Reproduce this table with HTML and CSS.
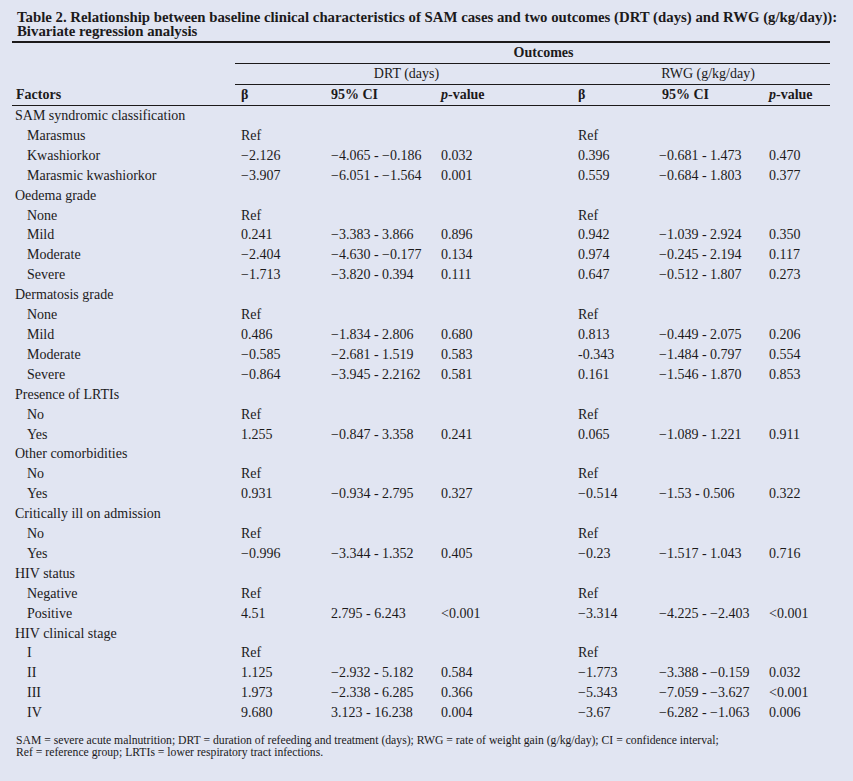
FILE: index.html
```html
<!DOCTYPE html>
<html lang="en">
<head>
<meta charset="utf-8">
<title>Table 2</title>
<link rel="stylesheet" href="styles.css">
</head>
<body>
<div class="page">
  <h1 class="title">Table 2. Relationship between baseline clinical characteristics of SAM cases and two outcomes (DRT (days) and RWG (g/kg/day)):<br>Bivariate regression analysis</h1>
  <table class="stats">
    <colgroup>
      <col class="c-factor"><col class="c-b1"><col class="c-ci1"><col class="c-p1"><col class="c-b2"><col class="c-ci2"><col class="c-p2">
    </colgroup>
    <thead>
      <tr class="h-row">
        <th></th>
        <th colspan="6" class="h-span h-out">Outcomes</th>
      </tr>
      <tr class="h-row">
        <th></th>
        <th colspan="3" class="h-span h-drt">DRT (days)</th>
        <th colspan="3" class="h-span h-rwg">RWG (g/kg/day)</th>
      </tr>
      <tr class="h-row h-cols">
        <th class="factor">Factors</th>
        <th>β</th>
        <th>95% CI</th>
        <th><i>p</i>-value</th>
        <th>β</th>
        <th class="ci2">95% CI</th>
        <th><i>p</i>-value</th>
      </tr>
    </thead>
    <tbody>
      <tr><td class="cat" colspan="7">SAM syndromic classification</td></tr>
      <tr><td class="sub">Marasmus</td><td>Ref</td><td></td><td></td><td>Ref</td><td></td><td></td></tr>
      <tr><td class="sub">Kwashiorkor</td><td>−2.126</td><td>−4.065 - −0.186</td><td>0.032</td><td>0.396</td><td>−0.681 - 1.473</td><td>0.470</td></tr>
      <tr><td class="sub">Marasmic kwashiorkor</td><td>−3.907</td><td>−6.051 - −1.564</td><td>0.001</td><td>0.559</td><td>−0.684 - 1.803</td><td>0.377</td></tr>
      <tr><td class="cat" colspan="7">Oedema grade</td></tr>
      <tr><td class="sub">None</td><td>Ref</td><td></td><td></td><td>Ref</td><td></td><td></td></tr>
      <tr><td class="sub">Mild</td><td>0.241</td><td>−3.383 - 3.866</td><td>0.896</td><td>0.942</td><td>−1.039 - 2.924</td><td>0.350</td></tr>
      <tr><td class="sub">Moderate</td><td>−2.404</td><td>−4.630 - −0.177</td><td>0.134</td><td>0.974</td><td>−0.245 - 2.194</td><td>0.117</td></tr>
      <tr><td class="sub">Severe</td><td>−1.713</td><td>−3.820 - 0.394</td><td>0.111</td><td>0.647</td><td>−0.512 - 1.807</td><td>0.273</td></tr>
      <tr><td class="cat" colspan="7">Dermatosis grade</td></tr>
      <tr><td class="sub">None</td><td>Ref</td><td></td><td></td><td>Ref</td><td></td><td></td></tr>
      <tr><td class="sub">Mild</td><td>0.486</td><td>−1.834 - 2.806</td><td>0.680</td><td>0.813</td><td>−0.449 - 2.075</td><td>0.206</td></tr>
      <tr><td class="sub">Moderate</td><td>−0.585</td><td>−2.681 - 1.519</td><td>0.583</td><td>-0.343</td><td>−1.484 - 0.797</td><td>0.554</td></tr>
      <tr><td class="sub">Severe</td><td>−0.864</td><td>−3.945 - 2.2162</td><td>0.581</td><td>0.161</td><td>−1.546 - 1.870</td><td>0.853</td></tr>
      <tr><td class="cat" colspan="7">Presence of LRTIs</td></tr>
      <tr><td class="sub">No</td><td>Ref</td><td></td><td></td><td>Ref</td><td></td><td></td></tr>
      <tr><td class="sub">Yes</td><td>1.255</td><td>−0.847 - 3.358</td><td>0.241</td><td>0.065</td><td>−1.089 - 1.221</td><td>0.911</td></tr>
      <tr><td class="cat" colspan="7">Other comorbidities</td></tr>
      <tr><td class="sub">No</td><td>Ref</td><td></td><td></td><td>Ref</td><td></td><td></td></tr>
      <tr><td class="sub">Yes</td><td>0.931</td><td>−0.934 - 2.795</td><td>0.327</td><td>−0.514</td><td>−1.53 - 0.506</td><td>0.322</td></tr>
      <tr><td class="cat" colspan="7">Critically ill on admission</td></tr>
      <tr><td class="sub">No</td><td>Ref</td><td></td><td></td><td>Ref</td><td></td><td></td></tr>
      <tr><td class="sub">Yes</td><td>−0.996</td><td>−3.344 - 1.352</td><td>0.405</td><td>−0.23</td><td>−1.517 - 1.043</td><td>0.716</td></tr>
      <tr><td class="cat" colspan="7">HIV status</td></tr>
      <tr><td class="sub">Negative</td><td>Ref</td><td></td><td></td><td>Ref</td><td></td><td></td></tr>
      <tr><td class="sub">Positive</td><td>4.51</td><td>2.795 - 6.243</td><td>&lt;0.001</td><td>−3.314</td><td>−4.225 - −2.403</td><td>&lt;0.001</td></tr>
      <tr><td class="cat" colspan="7">HIV clinical stage</td></tr>
      <tr><td class="sub">I</td><td>Ref</td><td></td><td></td><td>Ref</td><td></td><td></td></tr>
      <tr><td class="sub">II</td><td>1.125</td><td>−2.932 - 5.182</td><td>0.584</td><td>−1.773</td><td>−3.388 - −0.159</td><td>0.032</td></tr>
      <tr><td class="sub">III</td><td>1.973</td><td>−2.338 - 6.285</td><td>0.366</td><td>−5.343</td><td>−7.059 - −3.627</td><td>&lt;0.001</td></tr>
      <tr><td class="sub">IV</td><td>9.680</td><td>3.123 - 16.238</td><td>0.004</td><td>−3.67</td><td>−6.282 - −1.063</td><td>0.006</td></tr>
    </tbody>
  </table>
  <p class="foot">SAM = severe acute malnutrition; DRT = duration of refeeding and treatment (days); RWG = rate of weight gain (g/kg/day); CI = confidence interval;<br>Ref = reference group; LRTIs = lower respiratory tract infections.</p>
</div>
</body>
</html>
```

FILE: styles.css
```css
html, body {
  margin: 0;
  padding: 0;
  background: #e1e5f2;
}

body {
  font-family: "Liberation Serif", "Times New Roman", serif;
  color: #1c1a1b;
}

.page {
  width: 853px;
  height: 781px;
  padding: 11px 0 0 12px;
  box-sizing: border-box;
}

.title {
  margin: 0 0 3px 5px;
  font-size: 14.8px;
  font-weight: bold;
  line-height: 13.5px;
  white-space: nowrap;
}

.stats {
  border-collapse: collapse;
  table-layout: fixed;
  width: 818px;
  border-top: 2px solid #1c1a1b;
  font-size: 14px;
}

.c-factor { width: 223px; }
.c-b1 { width: 90px; }
.c-ci1 { width: 110px; }
.c-p1 { width: 137px; }
.c-b2 { width: 81px; }
.c-ci2 { width: 110px; }
.c-p2 { width: 67px; }

.stats th,
.stats td {
  padding: 0 0 0 6px;
  text-align: left;
  white-space: nowrap;
}

.h-row th {
  height: 20px;
  line-height: 20px;
  font-weight: bold;
}

.stats .h-span {
  text-align: center;
  font-weight: normal;
  border-bottom: 1px solid #1c1a1b;
}

.stats .h-out {
  font-weight: bold;
  padding-left: 22px;
}

.stats .h-rwg {
  padding-left: 14px;
}

.h-cols th {
  border-bottom: 1px solid #1c1a1b;
}

.stats .h-cols .factor {
  padding-left: 4px;
}

.stats .h-cols .ci2 {
  padding-left: 9px;
}

.stats tbody td {
  height: 19.9px;
  line-height: 19.9px;
}

.stats td.cat {
  padding-left: 3px;
}

.stats td.sub {
  padding-left: 15px;
}

.foot {
  margin: 12px 0 0 4px;
  font-size: 11.7px;
  line-height: 12px;
  white-space: nowrap;
}
```
